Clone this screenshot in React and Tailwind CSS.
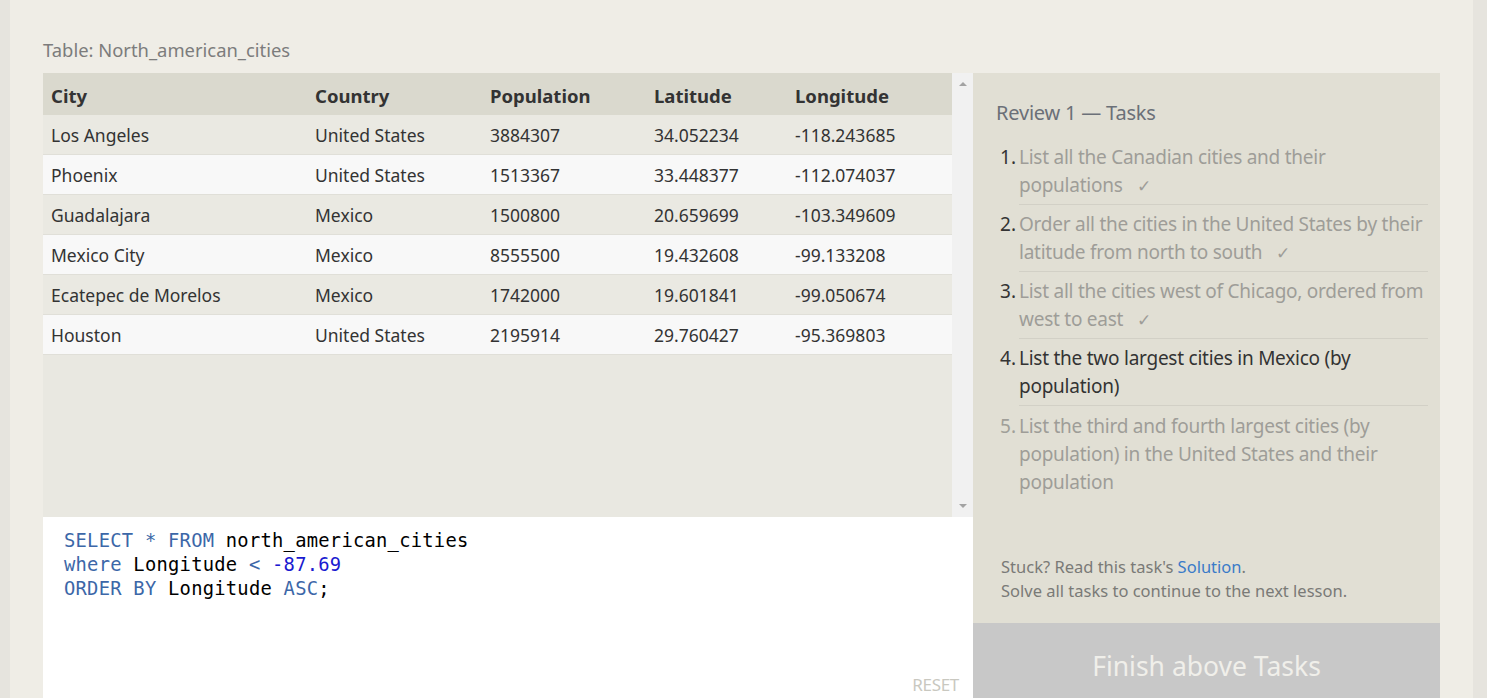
import React from 'react';

const rows = [
  ['Los Angeles', 'United States', '3884307', '34.052234', '-118.243685'],
  ['Phoenix', 'United States', '1513367', '33.448377', '-112.074037'],
  ['Guadalajara', 'Mexico', '1500800', '20.659699', '-103.349609'],
  ['Mexico City', 'Mexico', '8555500', '19.432608', '-99.133208'],
  ['Ecatepec de Morelos', 'Mexico', '1742000', '19.601841', '-99.050674'],
  ['Houston', 'United States', '2195914', '29.760427', '-95.369803'],
];

const cols = 'grid grid-cols-[265px_175px_164px_141px_164px]';

const tasks = [
  { text: 'List all the Canadian cities and their populations', done: true },
  { text: 'Order all the cities in the United States by their latitude from north to south', done: true },
  { text: 'List all the cities west of Chicago, ordered from west to east', done: true },
  { text: 'List the two largest cities in Mexico (by population)', active: true },
  { text: 'List the third and fourth largest cities (by population) in the United States and their population' },
];

function Scrollbar() {
  return (
    <div className="w-[21px] bg-[#f1f1f1] flex flex-col items-center justify-between py-[9px]">
      <div className="w-0 h-0 border-l-[4px] border-r-[4px] border-b-[4px] border-l-transparent border-r-transparent border-b-[#a3a3a3]" />
      <div className="w-0 h-0 border-l-[4px] border-r-[4px] border-t-[4px] border-l-transparent border-r-transparent border-t-[#a3a3a3]" />
    </div>
  );
}

export default function App() {
  return (
    <div className="w-[1487px] h-[698px] overflow-hidden bg-[#e6e4de] font-['Noto_Sans',sans-serif] flex">
      <div className="ml-[10px] w-[1463px] h-full bg-[#efede6] pl-[33px] pr-[33px] pt-[37px]">
        <div className="text-[18.4px] leading-[26px] text-[#7c7c7c]">Table: North_american_cities</div>
        <div className="mt-[10px] flex">
          <div className="w-[930px] flex flex-col">
            <div className="h-[444px] flex bg-[#e9e8e1]">
              <div className="w-[909px] text-[#333]">
                <div className={`${cols} h-[42px] pt-[3px] items-center bg-[#dad9ce] font-bold text-[18.5px]`}>
                  <div className="pl-[8px]">City</div>
                  <div className="pl-[7px]">Country</div>
                  <div className="pl-[7px]">Population</div>
                  <div className="pl-[7px]">Latitude</div>
                  <div className="pl-[7px]">Longitude</div>
                </div>
                {rows.map((r, i) => (
                  <div
                    key={r[0]}
                    className={`${cols} h-[40px] pt-[2px] items-center text-[17.5px] border-b border-[#e0dfd8] ${i % 2 ? 'bg-[#f8f8f8]' : 'bg-[#eae9e2]'}`}
                  >
                    {r.map((c, j) => (
                      <div key={j} className={j === 0 ? 'pl-[8px]' : 'pl-[7px]'}>{c}</div>
                    ))}
                  </div>
                ))}
              </div>
              <Scrollbar />
            </div>
            <div className="h-[181px] bg-white flex flex-col justify-between pl-[21px] pr-[14px] pt-[12px] pb-[1px]">
              <pre className="font-['DejaVu_Sans_Mono',monospace] text-[18.8px] leading-[24px] text-black tracking-[0.25px]">
                <span className="text-[#3c67a8]">SELECT * FROM</span> north_american_cities{'\n'}
                <span className="text-[#3c67a8]">where</span> Longitude <span className="text-[#3c67a8]">&lt;</span> <span className="text-[#1a1ad0]">-87.69</span>{'\n'}
                <span className="text-[#3c67a8]">ORDER BY</span> Longitude <span className="text-[#3c67a8]">ASC</span>;
              </pre>
              <div className="self-end text-[17px] text-[#c9c8c0] tracking-[-0.3px]">RESET</div>
            </div>
          </div>
          <div className="w-[467px] flex flex-col">
            <div className="h-[550px] bg-[#e1dfd4] pl-[23px] pr-[12px] pt-[25px] flex flex-col">
              <div className="text-[20px] leading-[30px] text-[#6b7078] tracking-[-0.2px]">Review 1 — Tasks</div>
              <ol className="mt-[10px] pl-[23px]">
                {tasks.map((t, i) => (
                  <li
                    key={i}
                    className={`flex border-[#d2d0c6] py-[5px] ${i < tasks.length - 1 ? 'border-b' : ''} ${i === 4 ? 'pt-[6px]' : ''}`}
                  >
                    <span className={`w-0 -ml-[19px] pr-[19px] text-[19px] leading-[28px] ${t.active || t.done ? 'text-[#333]' : 'text-[#a09f99]'}`}>
                      <span className="inline-block w-[19px] whitespace-nowrap">{i + 1}.</span>
                    </span>
                    <span className={`text-[19px] leading-[28px] tracking-[-0.25px] ${t.active ? 'text-[#333]' : 'text-[#9e9d98]'}`}>
                      {t.text}
                      {t.done && <span className="inline-block ml-[14px] leading-[20px] text-[17px]">✓</span>}
                    </span>
                  </li>
                ))}
              </ol>
              <div className="mt-auto mb-[20px] pl-[5px] text-[16.5px] leading-[24px] text-[#7a7a77]">
                <div>
                  Stuck? Read this task's <span className="text-[#3a7bc8]">Solution</span>.
                </div>
                <div>Solve all tasks to continue to the next lesson.</div>
              </div>
            </div>
            <div className="h-[75px] pt-[12px] bg-[#c8c8c8] flex items-center justify-center text-[26.5px] text-[#f0efea]">
              Finish above Tasks
            </div>
          </div>
        </div>
      </div>
    </div>
  );
}
